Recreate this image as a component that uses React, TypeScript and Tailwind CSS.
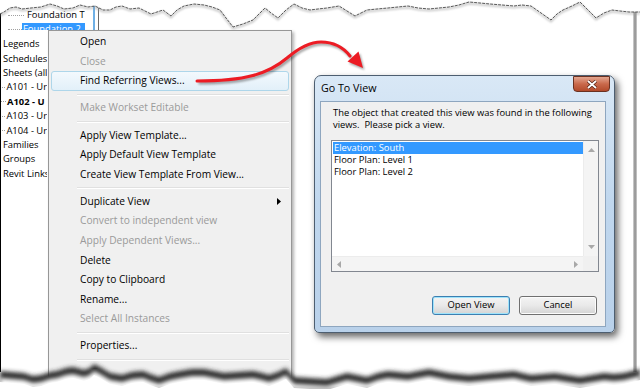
import React from "react";

type MenuEntry = {
  label?: string;
  disabled?: boolean;
  active?: boolean;
  submenu?: boolean;
  sep?: boolean;
};

const menuEntries: MenuEntry[] = [
  { label: "Open" },
  { label: "Close", disabled: true },
  { label: "Find Referring Views...", active: true },
  { sep: true },
  { label: "Make Workset Editable", disabled: true },
  { sep: true },
  { label: "Apply View Template..." },
  { label: "Apply Default View Template" },
  { label: "Create View Template From View..." },
  { sep: true },
  { label: "Duplicate View", submenu: true },
  { label: "Convert to independent view", disabled: true },
  { label: "Apply Dependent Views...", disabled: true },
  { label: "Delete" },
  { label: "Copy to Clipboard" },
  { label: "Rename..." },
  { label: "Select All Instances", disabled: true },
  { sep: true },
  { label: "Properties..." },
  { sep: true },
];

// only the part left of the menu is visible
const treeRows = [
  { label: "Legends" },
  { label: "Schedules" },
  { label: "Sheets (all" },
  { label: "A101 - Ur", leaf: true },
  { label: "A102 - U", leaf: true, bold: true },
  { label: "A103 - Ur", leaf: true },
  { label: "A104 - Ur", leaf: true },
  { label: "Families" },
  { label: "Groups" },
  { label: "Revit Links" },
];

const topEdge: [number, number][] = [
  [0, 14], [4, 12], [10, 8], [16, 7], [22, 9], [31, 8], [41, 7], [50, 4], [57, 6],
  [64, 9], [73, 8], [80, 5], [88, 7], [95, 6], [103, 10], [110, 10], [116, 7],
  [122, 6], [130, 9], [139, 8], [145, 11], [151, 14], [157, 12], [163, 10],
  [167, 13], [171, 16], [177, 10], [184, 6], [194, 4], [204, 5], [212, 7],
  [220, 10], [226, 18], [233, 27], [243, 24], [253, 20], [259, 14], [265, 8],
  [271, 13], [278, 18], [286, 10], [294, 4], [302, 8], [310, 10], [318, 9],
  [327, 8], [333, 7], [339, 6], [347, 11], [355, 16], [361, 13], [367, 10],
  [377, 9], [388, 8], [398, 7], [408, 6], [418, 8], [429, 9], [439, 8],
  [449, 7], [459, 5], [469, 2], [480, 3], [490, 4], [502, 5], [514, 6],
  [522, 5], [531, 6], [541, 13], [551, 20], [557, 14], [563, 10], [572, 6],
  [580, 2], [588, 10], [596, 18], [604, 13], [612, 10], [620, 11], [629, 12],
  [640, 12],
];

const bottomEdge: [number, number][] = [
  [0, 369], [12, 370], [24, 371], [33, 374], [41, 373], [50, 370], [57, 369],
  [66, 366], [73, 365], [84, 368], [90, 366], [94, 362], [100, 365], [110, 371],
  [122, 373], [132, 370], [143, 369], [150, 372], [159, 375], [170, 371],
  [180, 369], [192, 367], [204, 367], [214, 369], [224, 371], [238, 370],
  [253, 369], [262, 371], [269, 373], [278, 370], [286, 366], [294, 375],
  [310, 376], [327, 377], [337, 374], [347, 371], [357, 373], [367, 375],
  [378, 371], [388, 369], [398, 370], [408, 371], [418, 369], [429, 367],
  [439, 369], [449, 371], [459, 372], [469, 373], [480, 372], [490, 371],
  [502, 370], [514, 369], [522, 371], [531, 373], [543, 372], [555, 371],
  [567, 373], [580, 375], [592, 373], [604, 371], [614, 372], [624, 371],
  [632, 369], [640, 367],
];

const pts = (list: [number, number][], dy = 0) =>
  list.map(([x, y]) => `${x},${y + dy}`).join(" ");

function Tree() {
  return (
    <div className="relative h-full w-[100px] shrink-0 text-[9.4px] leading-[12px]">
      <div className="absolute left-0 top-[12px] h-[360px] w-px bg-black" />
      <div className="flex h-full w-[94px] flex-col pt-[9px]">
        <div className="flex h-[12px] items-center">
          <div className="ml-[8px] w-[16px] border-t border-dotted border-[#a0a0a0]" />
          <span className="pl-[3px]">Foundation T</span>
        </div>
        <div className="mt-[2px] flex h-[12px] items-center">
          <div className="ml-[8px] w-[14px] border-t border-dotted border-[#a0a0a0]" />
          <span className="h-[7px] self-start bg-[#3399ff] px-[1px] pr-[4px] text-white">Foundation 2</span>
        </div>
        <div className="mt-[2px] flex w-[47px] flex-col overflow-hidden">
          {treeRows.map((r) => (
            <div key={r.label} className="flex h-[14.4px] items-center whitespace-nowrap">
              {r.leaf && <div className="w-[6px] border-t border-dotted border-[#a0a0a0]" />}
              <span className={`${r.leaf ? "pl-[1px]" : "pl-[3px]"} ${r.bold ? "font-bold" : ""}`}>
                {r.label}
              </span>
            </div>
          ))}
        </div>
      </div>
      <div className="absolute left-[93px] top-0 h-[40px] w-[2px] bg-[#6fb0e6]" />
      <div className="absolute left-[98px] top-0 h-[40px] w-px bg-[#6a6a6a]" />
    </div>
  );
}

function ContextMenu() {
  return (
    <div className="absolute left-[48px] top-[30px] h-[360px] w-[244px] border border-[#979797] bg-[#f0f0f0] p-px text-[10.2px] shadow-[2px_2px_3px_rgba(0,0,0,0.3)]">
      <div className="flex flex-col">
        {menuEntries.map((m, i) =>
          m.sep ? (
            <div key={i} className="flex h-[7.5px] items-center pl-[27px] pr-[1px]">
              <div className="h-[2px] w-full border-b border-white bg-[#e0e0e0]" />
            </div>
          ) : (
            <div
              key={i}
              className={`flex h-[19.6px] items-center whitespace-nowrap ${
                m.active
                  ? "mx-px rounded-[3px] border border-[#aed6ea] bg-gradient-to-b from-[#f3f9fd] to-[#e2f0f9] pl-[28px]"
                  : "pl-[30px]"
              } ${m.disabled ? "text-[#9a9a9a]" : "text-black"}`}
            >
              <span>{m.label}</span>
              {m.submenu && (
                <svg className="ml-auto mr-[9px]" width="4" height="7" viewBox="0 0 4 7">
                  <path d="M0 0 L4 3.5 L0 7 Z" fill="#000" />
                </svg>
              )}
            </div>
          )
        )}
      </div>
    </div>
  );
}

function VistaButton({ label, primary }: { label: string; primary?: boolean }) {
  return (
    <div
      className={`flex h-[19px] w-[78px] items-center justify-center rounded-[3px] border text-[9.4px] text-black ${
        primary
          ? "border-[#3c7fb1] shadow-[inset_0_0_0_1px_#9ee3fb]"
          : "border-[#707070] shadow-[inset_0_0_0_1px_#fcfcfc]"
      } bg-gradient-to-b from-[#f4f4f4] via-[#e9e9e9] to-[#d4d4d4]`}
    >
      {label}
    </div>
  );
}

function GoToViewDialog() {
  return (
    <div className="absolute left-[314px] top-[75px] flex h-[258px] w-[301px] flex-col rounded-t-[7px] rounded-b-[5px] border border-[#4d5e70] bg-gradient-to-b from-[#d9e8f6] via-[#c0d7ee] to-[#b9d1ea] pb-[5px] pl-[5px] pr-[8px] shadow-[3px_4px_7px_rgba(0,0,0,0.6)]">
      <div className="relative flex h-[25px] shrink-0 items-center pl-[1px]">
        <span className="text-[10.7px] text-black">Go To View</span>
        <div className="absolute right-[-4px] top-0 flex h-[16px] w-[37px] items-center justify-center rounded-b-[4px] border border-[#6a3121] bg-gradient-to-b from-[#e3a58f] via-[#c9694b] to-[#b24a2b]">
          <svg width="10" height="9" viewBox="0 0 10 9">
            <path d="M1 1 L9 8 M9 1 L1 8" stroke="#4a1a0e" strokeWidth="3.2" />
            <path d="M1 1 L9 8 M9 1 L1 8" stroke="#fff" strokeWidth="1.8" />
          </svg>
        </div>
      </div>
      <div className="flex flex-1 flex-col border border-[#8ea6bf] bg-[#f0f0f0] pl-[10px] pr-[6px] pt-[5px]">
        <p className="pl-[2px] text-[9.4px] leading-[12px] text-black">
          The object that created this view was found in the following
          <br />
          views.&nbsp; Please pick a view.
        </p>
        <div className="mt-[9px] grid h-[132px] w-[268px] grid-cols-[1fr_15px] grid-rows-[1fr_15px] border border-[#828790] bg-white text-[9.4px] leading-[12px]">
          <div className="flex flex-col pl-px pt-px">
            <div className="h-[12px] bg-[#3399ff] pl-[1px] text-white">Elevation: South</div>
            <div className="h-[12px] pl-[1px]">Floor Plan: Level 1</div>
            <div className="h-[12px] pl-[1px]">Floor Plan: Level 2</div>
          </div>
          <div className="flex flex-col items-center justify-between border-l border-[#ececec] bg-[#f4f4f4] py-[7px]">
            <svg width="7" height="4" viewBox="0 0 7 4">
              <path d="M0 4 L3.5 0 L7 4 Z" fill="#a8a8a8" />
            </svg>
            <svg width="7" height="4" viewBox="0 0 7 4">
              <path d="M0 0 L3.5 4 L7 0 Z" fill="#a8a8a8" />
            </svg>
          </div>
          <div className="flex items-center justify-between border-t border-[#ececec] bg-[#f4f4f4] px-[5px]">
            <svg width="4" height="7" viewBox="0 0 4 7">
              <path d="M4 0 L0 3.5 L4 7 Z" fill="#a8a8a8" />
            </svg>
            <svg width="4" height="7" viewBox="0 0 4 7">
              <path d="M0 0 L4 3.5 L0 7 Z" fill="#a8a8a8" />
            </svg>
          </div>
          <div className="bg-[#f0f0f0]" />
        </div>
        <div className="mt-[24px] flex justify-end gap-[9px] pr-[2px]">
          <VistaButton label="Open View" primary />
          <VistaButton label="Cancel" />
        </div>
      </div>
    </div>
  );
}

function Decorations() {
  return (
    <svg className="pointer-events-none absolute inset-0" width="640" height="389" viewBox="0 0 640 389">
      <defs>
        <filter id="soft" x="-10%" y="-10%" width="120%" height="120%">
          <feGaussianBlur stdDeviation="2" />
        </filter>
        <filter id="arrowShadow" x="-20%" y="-20%" width="140%" height="140%">
          <feGaussianBlur stdDeviation="1.2" />
        </filter>
        <linearGradient id="rightShadow" x1="0" x2="1">
          <stop offset="0" stopColor="#d8d8d8" />
          <stop offset="0.5" stopColor="#8a8a8a" />
          <stop offset="1" stopColor="#d0d0d0" />
        </linearGradient>
      </defs>

      {/* red arrow */}
      <g transform="translate(1.5,2)" opacity="0.35" filter="url(#arrowShadow)">
        <path d="M197 81 C 245 81, 268 74, 287 58 C 300 47, 310 42, 321 42 C 334 42, 343 47, 350 56" stroke="#000" strokeWidth="3" fill="none" />
        <path d="M363 68 L347.5 61.5 L358.5 51.5 Z" fill="#000" />
      </g>
      <path d="M197 81 C 245 81, 268 74, 287 58 C 300 47, 310 42, 321 42 C 334 42, 343 47, 350 56" stroke="#ec1c24" strokeWidth="3" strokeLinecap="round" fill="none" />
      <path d="M363 68 L347.5 61.5 L358.5 51.5 Z" fill="#ec1c24" />

      {/* right edge of the paper */}
      <rect x="633" y="0" width="7" height="389" fill="#fff" />
      <rect x="633" y="12" width="4" height="360" fill="url(#rightShadow)" />

      {/* torn top edge */}
      <polygon points={`0,0 640,0 ${pts([...topEdge].reverse())}`} fill="#fff" />
      <polyline points={pts(topEdge, 1.5)} fill="none" stroke="#9a9a9a" strokeWidth="1.5" filter="url(#arrowShadow)" opacity="0.7" />
      <polyline points={pts(topEdge)} fill="none" stroke="#333" strokeWidth="0.8" strokeDasharray="3 1" />

      {/* torn bottom edge */}
      <polygon points={`${pts(bottomEdge, 2)} 640,389 0,389`} fill="#2e2e2e" filter="url(#soft)" />
      <polygon points={`${pts(bottomEdge, 9)} 640,389 0,389`} fill="#fff" filter="url(#soft)" />
      <polygon points={`${pts(bottomEdge, 13)} 640,389 0,389`} fill="#fff" />
    </svg>
  );
}

export default function App() {
  return (
    <div className="relative h-[389px] w-[640px] overflow-hidden bg-white font-['Open_Sans',sans-serif] text-black">
      <div className="flex h-full">
        <Tree />
        <div className="flex-1" />
      </div>
      <ContextMenu />
      <GoToViewDialog />
      <Decorations />
    </div>
  );
}
